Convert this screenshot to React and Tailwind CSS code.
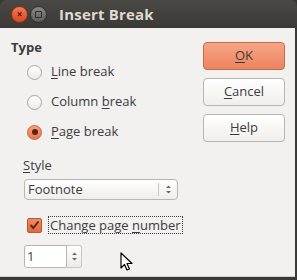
import React from "react";

const font = { fontFamily: "'Open Sans', 'DejaVu Sans', sans-serif" };

function Radio({ checked, children }) {
  return (
    <div className="flex items-center h-[30px]">
      <span
        className={
          "w-[15px] h-[15px] rounded-full flex items-center justify-center border " +
          (checked
            ? "border-[#c8643e] bg-gradient-to-b from-[#f5a07c] to-[#e7754c]"
            : "border-[#a9a7a2] bg-gradient-to-b from-white to-[#ecebe9]")
        }
      >
        {checked && <span className="w-[6px] h-[6px] rounded-full bg-[#5a2412]" />}
      </span>
      <span className="ml-[9px] text-[13px] text-[#3c3c3c]">{children}</span>
    </div>
  );
}

function Button({ primary, children }) {
  return (
    <button
      className={
        "w-[82px] h-[28px] rounded-[4px] border text-[13px] text-[#3c3c3c] flex items-center justify-center " +
        (primary
          ? "border-[#c96a46] bg-gradient-to-b from-[#f7a583] to-[#ec8460]"
          : "border-[#b8b5ae] bg-gradient-to-b from-white to-[#f0efed]")
      }
    >
      {children}
    </button>
  );
}

export default function App() {
  return (
    <div className="w-[297px] h-[280px] bg-[#3a3935] overflow-hidden" style={font}>
      {/* Title bar */}
      <div className="h-[28px] rounded-t-[7px] bg-gradient-to-b from-[#4a4945] to-[#3a3935] flex items-center">
        <span className="ml-[11px] w-[17px] h-[17px] rounded-full bg-gradient-to-b from-[#f47a4f] to-[#d9471f] border border-[#8a2f16] flex items-center justify-center text-[10px] font-bold text-[#5a1a08] leading-none">
          ×
        </span>
        <span className="ml-[2px] w-[17px] h-[17px] rounded-full bg-gradient-to-b from-[#8a8985] to-[#5c5b57] border border-[#2f2e2b] flex items-center justify-center">
          <span className="w-[7px] h-[7px] border border-[#2e2d2a] rounded-[1px]" />
        </span>
        <span className="ml-[12px] text-[15px] font-bold text-[#dfdbd2] tracking-[0.2px]">Insert Break</span>
      </div>

      {/* Body */}
      <div className="relative w-[295px] h-[249px] bg-[#f2f1f0] border-b border-[#d5d3cf] flex">
        <div className="flex-1 pl-[11px] pt-[11px]">
          <div className="text-[13px] font-bold text-[#3c3c3c] leading-[16px]">Type</div>
          <div className="pl-[16px] mt-[2px]">
            <Radio>
              <span className="underline underline-offset-2">L</span>ine break
            </Radio>
            <Radio>
              Column <span className="underline underline-offset-2">b</span>reak
            </Radio>
            <Radio checked>
              <span className="underline underline-offset-2">P</span>age break
            </Radio>
          </div>
          <div className="mt-[10px] pl-[12px] text-[13px] text-[#3c3c3c] leading-[16px]">
            <span className="underline underline-offset-2">S</span>tyle
          </div>
          <div className="ml-[13px] mt-[6px] w-[154px] h-[21px] rounded-[4px] border border-[#b9b6b0] bg-gradient-to-b from-white to-[#efeeec] flex items-center">
            <span className="flex-1 pl-[3px] text-[13px] text-[#3c3c3c]">Footnote</span>
            <span className="w-[19px] h-[13px] border-l border-[#c9c6c0] flex flex-col items-center justify-center">
              <svg width="7" height="11" viewBox="0 0 7 11">
                <path d="M1 4 L3.5 1.5 L6 4 Z" fill="#6b6966" />
                <path d="M1 7 L3.5 9.5 L6 7 Z" fill="#6b6966" />
              </svg>
            </span>
          </div>
          <div className="mt-[16px] ml-[16px] flex items-center">
            <span className="w-[15px] h-[15px] rounded-[2px] border border-[#b9592f] bg-gradient-to-b from-[#f08a62] to-[#df6b40] flex items-center justify-center">
              <svg width="11" height="10" viewBox="0 0 11 10">
                <path d="M1.5 5 L4.3 8 L9.5 1.5" stroke="#5a2412" strokeWidth="2" fill="none" />
              </svg>
            </span>
            <span className="ml-[6px] px-[1px] h-[18px] border border-dotted border-[#3c3c3c] text-[13px] text-[#3c3c3c] leading-[16px]">
              Change page <span className="underline underline-offset-2">n</span>umber
            </span>
          </div>
          <div className="mt-[11px] ml-[13px] w-[58px] h-[23px] flex">
            <div className="w-[43px] h-full border border-[#b9b6b0] rounded-l-[3px] bg-white text-[13px] text-[#3c3c3c] pl-[2px] flex items-center">
              1
            </div>
            <div className="w-[15px] h-full border border-l-0 border-[#c9c6c0] rounded-r-[3px] bg-gradient-to-b from-white to-[#ebeae8] flex items-center justify-center">
              <svg width="7" height="11" viewBox="0 0 7 11">
                <path d="M1 4 L3.5 1.5 L6 4 Z" fill="#6b6966" />
                <path d="M1 7 L3.5 9.5 L6 7 Z" fill="#6b6966" />
              </svg>
            </div>
          </div>
        </div>
        <div className="w-[96px] pt-[14px] pl-[4px] flex flex-col gap-[8px]">
          <Button primary>
            <span className="underline underline-offset-2">O</span>K
          </Button>
          <Button>
            <span className="underline underline-offset-2">C</span>ancel
          </Button>
          <Button>
            <span className="underline underline-offset-2">H</span>elp
          </Button>
        </div>

        {/* Mouse pointer */}
        <svg className="absolute left-[120px] top-[224px]" width="14" height="20" viewBox="0 0 14 20">
          <path d="M1 1 L1 16 L4.5 12.5 L7 18 L9.5 17 L7 11.5 L12 11.5 Z" fill="#fff" stroke="#000" strokeWidth="1.2" strokeLinejoin="round" />
        </svg>
      </div>
    </div>
  );
}
